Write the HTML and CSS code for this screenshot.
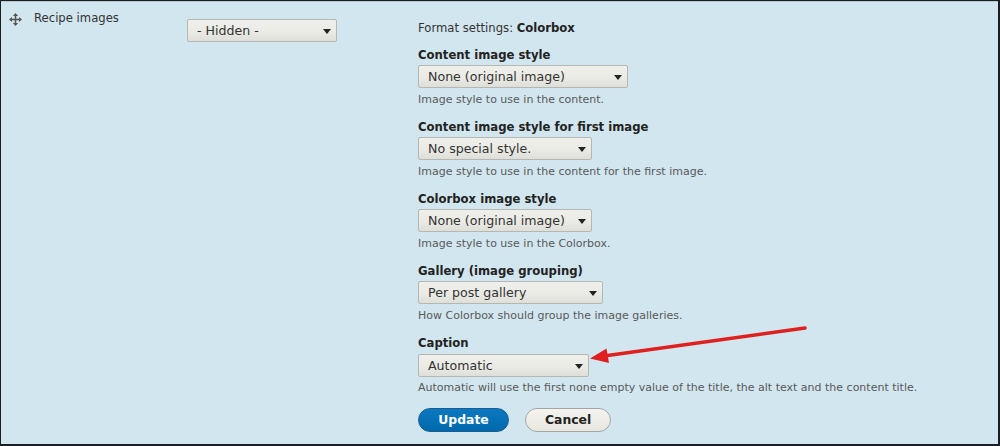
FILE: index.html
```html
<!DOCTYPE html>
<html lang="en">
<head>
<meta charset="utf-8">
<title>Recipe images – format settings</title>
<link rel="stylesheet" href="styles.css">
</head>
<body>
<div class="row">
  <div class="cell-name">
    <svg class="handle" width="13" height="13" viewBox="0 0 12 12" aria-hidden="true">
      <path d="M6 1.5V10.5M1.5 6H10.5" stroke="#555" stroke-width="1.4" fill="none"/>
      <path d="M6 0L8.4 2.8H3.6Z M6 12L8.4 9.2H3.6Z M0 6L2.8 3.6V8.4Z M12 6L9.2 3.6V8.4Z" fill="#555"/>
    </svg>
    <span class="name">Recipe images</span>
  </div>
  <div class="cell-label">
    <div class="select w150"><span>- Hidden -</span></div>
  </div>
  <div class="cell-settings">
    <div class="format">Format settings: <strong>Colorbox</strong></div>

    <div class="field">
      <label>Content image style</label>
      <div class="select w210"><span>None (original image)</span></div>
      <div class="desc">Image style to use in the content.</div>
    </div>

    <div class="field">
      <label>Content image style for first image</label>
      <div class="select w174"><span>No special style.</span></div>
      <div class="desc">Image style to use in the content for the first image.</div>
    </div>

    <div class="field">
      <label>Colorbox image style</label>
      <div class="select w174"><span>None (original image)</span></div>
      <div class="desc">Image style to use in the Colorbox.</div>
    </div>

    <div class="field">
      <label>Gallery (image grouping)</label>
      <div class="select w185"><span>Per post gallery</span></div>
      <div class="desc">How Colorbox should group the image galleries.</div>
    </div>

    <div class="field">
      <label>Caption</label>
      <div class="select w171"><span>Automatic</span></div>
      <div class="desc">Automatic will use the first none empty value of the title, the alt text and the content title.</div>
    </div>

    <div class="actions">
      <button class="btn btn-primary" type="button">Update</button>
      <button class="btn btn-secondary" type="button">Cancel</button>
    </div>
  </div>
</div>

<svg class="callout" width="1000" height="446" viewBox="0 0 1000 446" aria-hidden="true">
  <line x1="805" y1="328" x2="604" y2="356" stroke="#e0201f" stroke-width="3.6" stroke-linecap="round"/>
  <polygon points="590,358.5 609,363 606.5,348.5" fill="#e0201f"/>
</svg>
</body>
</html>
```

FILE: styles.css
```css
html {
  background: #d2e6ef;
}

body {
  margin: 0;
  height: 446px;
  box-sizing: border-box;
  border-style: solid;
  border-color: #1b1f24;
  border-width: 1px 2px 2px 1px;
  background: #d2e6ef;
  box-shadow: inset 0 1px 0 #b8c8cf;
  position: relative;
  font-family: "DejaVu Sans", "Noto Sans", sans-serif;
  color: #333;
}

.row {
  display: grid;
  grid-template-columns: 186px 231px 1fr;
}

.cell-name {
  padding-top: 10px;
  padding-left: 8px;
  display: flex;
  align-items: flex-start;
  gap: 12px;
}

.handle {
  margin-top: 2px;
  flex: none;
}

.name {
  font-size: 11.65px;
  line-height: 15px;
  color: #333;
}

.cell-label {
  padding-top: 18px;
}

.cell-settings {
  padding-top: 19.5px;
}

.format {
  font-size: 11.65px;
  line-height: 15px;
  color: #333;
  margin-bottom: 12.4px;
}

.format strong {
  color: #222;
}

.field {
  margin-bottom: 12.9px;
}

.field label {
  display: block;
  font-size: 11.65px;
  line-height: 15px;
  font-weight: bold;
  color: #222;
}

.select {
  position: relative;
  box-sizing: border-box;
  height: 23px;
  margin-top: 2.3px;
  padding: 0 22px 0 9px;
  border: 1px solid #b6b6b2;
  border-radius: 2px;
  background: linear-gradient(#efefeb 0%, #ebebe6 55%, #dfdfd9 100%);
  font-size: 12.6px;
  line-height: 22px;
  color: #333;
  white-space: nowrap;
  overflow: hidden;
}

.cell-label .select {
  margin-top: 0;
}

.select::after {
  content: "";
  position: absolute;
  right: 5px;
  top: 9px;
  border-left: 4px solid transparent;
  border-right: 4px solid transparent;
  border-top: 5px solid #222;
}

.w150 { width: 150px; }
.w210 { width: 210px; }
.w174 { width: 174px; }
.w185 { width: 185px; }
.w171 { width: 171px; }

.desc {
  margin-top: 4.9px;
  font-size: 11px;
  line-height: 14px;
  color: #595959;
}

.actions {
  display: flex;
  gap: 16px;
  margin-top: 1.5px;
}

.btn {
  box-sizing: border-box;
  height: 24px;
  padding: 0 19px;
  border-radius: 14px;
  font-family: "DejaVu Sans", "Noto Sans", sans-serif;
  font-size: 12.4px;
  font-weight: bold;
  line-height: 22px;
  cursor: pointer;
}

.btn-primary {
  width: 91px;
  background: linear-gradient(#0b78c0, #0069ad);
  border: 1px solid #1a5e8f;
  color: #fff;
}

.btn-secondary {
  width: 86px;
  background: linear-gradient(#f4f3ef, #e8e7e1);
  border: 1px solid #a5a5a2;
  color: #222;
}

.callout {
  position: absolute;
  left: -1px;
  top: -1px;
  pointer-events: none;
}
```
